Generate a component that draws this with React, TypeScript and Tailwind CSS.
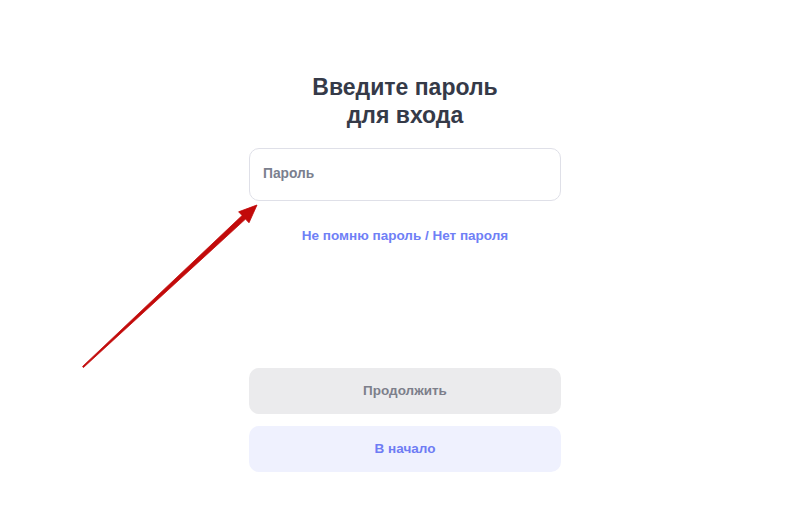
import React from 'react';

function Arrow() {
  return (
    <svg className="absolute left-0 top-0 pointer-events-none" width="800" height="530" viewBox="0 0 800 530">
      <polygon
        points="82.6,366.4 242.1,215.5 238.6,211.8 257,205 249,222.8 245.5,219.1 83.4,367.6"
        fill="#c20a0a"
        stroke="#c20a0a"
        strokeWidth="0.8"
        strokeLinejoin="round"
      />
    </svg>
  );
}

export default function App() {
  return (
    <div className="relative w-[800px] h-[530px] bg-white overflow-hidden font-['Liberation_Sans',Arial,sans-serif]">
      <div className="flex justify-center pl-[10px] pt-[73px]">
        <div className="w-[312px] flex flex-col items-center">
          <h1 className="text-[23px] leading-[28px] font-bold text-[#353a48] text-center">
            Введите пароль
            <br />
            для входа
          </h1>

          <div className="mt-[19px] w-full h-[53px] rounded-[10px] border border-[#dfe0e8] flex items-center px-[13px]">
            <input
              type="password"
              placeholder="Пароль"
              className="w-full bg-transparent outline-none text-[13.8px] font-bold placeholder:text-[#7b7f8e] text-[#353a48]"
            />
          </div>

          <button className="mt-[27px] text-[13.5px] font-bold text-[#6f80f6] leading-[16px]">
            Не помню пароль / Нет пароля
          </button>

          <button className="mt-[124px] w-full h-[46px] rounded-[10px] bg-[#ebebed] text-[13.5px] font-bold text-[#7d7f8b]">
            Продолжить
          </button>
          <button className="mt-[12px] w-full h-[46px] rounded-[10px] bg-[#eff1fe] text-[13.5px] font-bold text-[#6e7cf4]">
            В начало
          </button>
        </div>
      </div>
      <Arrow />
    </div>
  );
}
